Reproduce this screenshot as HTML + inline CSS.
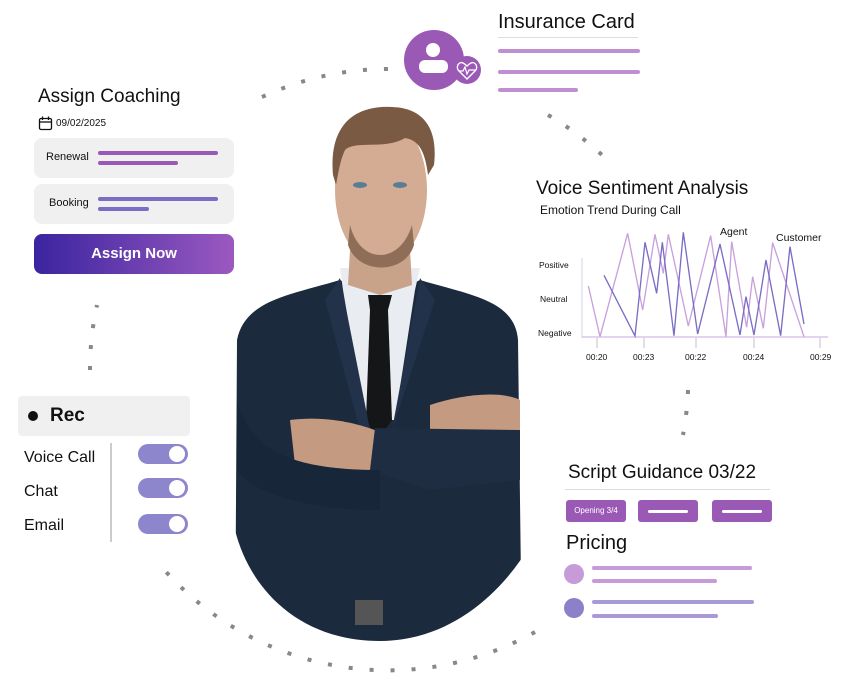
<!DOCTYPE html>
<html><head><meta charset="utf-8"><style>
*{margin:0;padding:0;box-sizing:border-box}
body{width:852px;height:673px;background:#fff;position:relative;overflow:hidden;font-family:"Liberation Sans",sans-serif;color:#111}
.a{position:absolute}
.bar{position:absolute;height:4px;border-radius:2px}
.tog{position:absolute;left:138px;width:50px;height:20px;border-radius:10px;background:#8e86cc}
.tog::after{content:"";position:absolute;right:3px;top:2px;width:16px;height:16px;border-radius:50%;background:#fff}
</style></head><body>
<svg class="a" style="left:0;top:0" width="852" height="673">
<g fill="none" stroke="#888" stroke-width="4" stroke-dasharray="4 17">
<path d="M262 97 A300 300 0 0 1 392 69"/>
<path d="M548 115 A300 300 0 0 1 602 155"/>
<path d="M688 390 A300 300 0 0 1 683 435"/>
<path d="M535 632 A300 300 0 0 1 160 565"/>
<path d="M90 370 A300 300 0 0 1 97 305"/>
</g>
<!-- man -->
<defs><clipPath id="c"><path d="M200 100 H560 V470 C540 560 470 641 380 641 C300 641 250 590 235 530 Z"/></clipPath></defs>
<g clip-path="url(#c)">
<path d="M237 340 C245 300 290 295 340 280 L380 300 L420 280 C470 295 515 300 518 340 L522 660 L235 660 Z" fill="#1b2a3c"/>
<path d="M340 268 L420 268 L415 290 L395 420 L365 420 L343 290 Z" fill="#e9ecf1"/>
<path d="M368 295 L392 295 L388 310 L392 420 L378 440 L366 420 L370 310 Z" fill="#151618"/>
<path d="M340 278 L325 300 L360 430 L372 440 Z" fill="#22324a"/>
<path d="M420 278 L435 300 L392 430 Z" fill="#22324a"/>
<rect x="355" y="600" width="28" height="25" fill="#555"/>
<path d="M290 420 C330 415 360 425 375 430 L380 470 C350 470 310 470 295 465 Z" fill="#c49a80"/>
<path d="M430 405 C460 395 500 390 520 400 L520 440 C490 445 450 445 430 440 Z" fill="#c49a80"/>
<path d="M375 428 L520 430 L520 480 L430 490 L370 470 Z" fill="#1e2d42"/>
<path d="M237 400 C250 450 290 470 380 470 L380 510 C300 510 250 490 237 470 Z" fill="#18263a"/>
<path d="M350 250 L410 250 L412 285 L380 295 L348 285 Z" fill="#c9a28a"/>
<ellipse cx="381" cy="190" rx="46" ry="75" fill="#d4ab93"/>
<path d="M350 225 C360 265 400 265 412 225 L414 245 C405 275 358 275 348 245 Z" fill="#8f6e58"/>
<path d="M333 175 C328 120 360 105 392 107 C425 108 438 130 434 165 L428 175 C425 150 418 140 405 138 C385 150 355 140 345 150 C340 160 338 175 336 185 Z" fill="#7a5a42"/>
<ellipse cx="360" cy="185" rx="7" ry="3" fill="#5b7d96"/>
<ellipse cx="400" cy="185" rx="7" ry="3" fill="#5b7d96"/>
</g>
<!-- chart -->
<line x1="582" y1="258" x2="582" y2="338" stroke="#e6e0ee" stroke-width="1.5"/>
<line x1="582" y1="337" x2="828" y2="337" stroke="#d9c6ea" stroke-width="1.5"/>
<g stroke="#ccc" stroke-width="1.2"><line x1="597" y1="338" x2="597" y2="348"/><line x1="644" y1="338" x2="644" y2="348"/><line x1="696" y1="338" x2="696" y2="348"/><line x1="754" y1="338" x2="754" y2="348"/><line x1="820" y1="338" x2="820" y2="348"/></g>
<g transform="translate(530,170) scale(0.3333)" fill="none" stroke-width="4">
<polyline stroke="#c9a0dc" points="175,348 210,500 293,190 338,420 375,193 400,310 415,193 475,468 542,197 588,500 605,215 650,472 668,320 700,475 728,218 822,500"/>
<polyline stroke="#7b6cc4" points="222,316 315,498 345,217 380,370 397,217 432,497 460,187 503,492 570,222 630,495 648,380 672,495 708,270 752,497 780,230 822,462"/>
</g>
<g font-size="8.5" fill="#111" font-family="Liberation Sans"><text x="539" y="268">Positive</text><text x="540" y="302">Neutral</text><text x="538" y="336">Negative</text>
<text x="586" y="360">00:20</text><text x="633" y="360">00:23</text><text x="685" y="360">00:22</text><text x="743" y="360">00:24</text><text x="810" y="360">00:29</text></g>
<g font-size="10.5" fill="#111"><text x="720" y="235">Agent</text><text x="776" y="241">Customer</text></g>
<!-- insurance icon -->
<circle cx="434" cy="60" r="30" fill="#9b59b6"/>
<circle cx="433" cy="50" r="7" fill="#fff"/>
<rect x="419" y="60" width="29" height="13" rx="6" fill="#fff"/>
<circle cx="467" cy="70" r="14" fill="#9b59b6"/>
<path d="M467 79 L459 71 C455 67 459 61 463 63 C465 64 466 65 467 66 C468 65 469 64 471 63 C475 61 479 67 475 71 Z" fill="none" stroke="#fff" stroke-width="1.4"/>
<path d="M459 71 H463 L465 67 L467 74 L469 70 H475" fill="none" stroke="#fff" stroke-width="1.2"/>
<!-- calendar -->
<rect x="39.5" y="118.5" width="12" height="11" rx="1.5" fill="none" stroke="#111" stroke-width="1.3"/>
<line x1="39.5" y1="122" x2="51.5" y2="122" stroke="#111" stroke-width="1.3"/>
<line x1="42.5" y1="116.5" x2="42.5" y2="120" stroke="#111" stroke-width="1.3"/><line x1="48.5" y1="116.5" x2="48.5" y2="120" stroke="#111" stroke-width="1.3"/>
<!-- waveform -->
<g stroke="#7b6cc4" stroke-width="1.6">
<line x1="98" y1="413" x2="98" y2="421"/><line x1="102" y1="409" x2="102" y2="425"/><line x1="106" y1="411" x2="106" y2="423"/><line x1="110" y1="406" x2="110" y2="428"/><line x1="114" y1="408" x2="114" y2="426"/><line x1="118" y1="403" x2="118" y2="431"/><line x1="122" y1="407" x2="122" y2="427"/><line x1="126" y1="410" x2="126" y2="424"/><line x1="130" y1="408" x2="130" y2="426"/><line x1="134" y1="413" x2="134" y2="421"/>
</g>
</svg>

<div class="a" style="left:498px;top:11px;font-size:20px">Insurance Card</div>
<div class="a" style="left:498px;top:37px;width:140px;height:1px;background:#ddd"></div>
<div class="bar" style="left:498px;top:49px;width:142px;background:#c08fd3"></div>
<div class="bar" style="left:498px;top:70px;width:142px;background:#c08fd3"></div>
<div class="bar" style="left:498px;top:88px;width:80px;background:#c08fd3"></div>

<div class="a" style="left:38px;top:86px;font-size:19px">Assign Coaching</div>
<div class="a" style="left:56px;top:118px;font-size:10px">09/02/2025</div>
<div class="a" style="left:34px;top:138px;width:200px;height:40px;border-radius:8px;background:#f0f0f0"></div>
<div class="a" style="left:46px;top:151px;font-size:11px">Renewal</div>
<div class="bar" style="left:98px;top:151px;width:120px;height:3.5px;background:#9b59b6"></div>
<div class="bar" style="left:98px;top:161px;width:80px;height:3.5px;background:#9b59b6"></div>
<div class="a" style="left:34px;top:184px;width:200px;height:40px;border-radius:8px;background:#f0f0f0"></div>
<div class="a" style="left:49px;top:197px;font-size:11px">Booking</div>
<div class="bar" style="left:98px;top:197px;width:120px;height:3.5px;background:#7b6cc4"></div>
<div class="bar" style="left:98px;top:207px;width:51px;height:3.5px;background:#7b6cc4"></div>
<div class="a" style="left:34px;top:234px;width:200px;height:40px;border-radius:8px;background:linear-gradient(90deg,#3a24a0,#9b59c0);color:#fff;font-weight:bold;font-size:15px;text-align:center;line-height:40px">Assign Now</div>

<div class="a" style="left:536px;top:178px;font-size:19px">Voice Sentiment Analysis</div>
<div class="a" style="left:540px;top:203px;font-size:12px">Emotion Trend During Call</div>

<div class="a" style="left:18px;top:396px;width:172px;height:40px;border-radius:4px;background:#f0f0f0"></div>
<div class="a" style="left:28px;top:411px;width:10px;height:10px;border-radius:50%;background:#111"></div>
<div class="a" style="left:50px;top:405px;font-size:19px;font-weight:bold">Rec</div>
<div class="a" style="left:110px;top:443px;width:1.5px;height:99px;background:#ccc"></div>
<div class="a" style="left:24px;top:449px;font-size:16px">Voice Call</div>
<div class="a" style="left:24px;top:483px;font-size:16px">Chat</div>
<div class="a" style="left:24px;top:517px;font-size:16px">Email</div>
<div class="tog" style="top:444px"></div>
<div class="tog" style="top:478px"></div>
<div class="tog" style="top:514px"></div>

<div class="a" style="left:568px;top:462px;font-size:19px">Script Guidance 03/22</div>
<div class="a" style="left:565px;top:489px;width:205px;height:1px;background:#ddd"></div>
<div class="a" style="left:566px;top:500px;width:60px;height:22px;border-radius:3px;background:#9b59b6;color:#fff;font-size:8px;text-align:center;line-height:22px">Opening 3/4</div>
<div class="a" style="left:638px;top:500px;width:60px;height:22px;border-radius:3px;background:#9b59b6"></div>
<div class="bar" style="left:648px;top:510px;width:40px;height:3px;background:#fff"></div>
<div class="a" style="left:712px;top:500px;width:60px;height:22px;border-radius:3px;background:#9b59b6"></div>
<div class="bar" style="left:722px;top:510px;width:40px;height:3px;background:#fff"></div>
<div class="a" style="left:566px;top:532px;font-size:20px">Pricing</div>
<div class="a" style="left:564px;top:564px;width:20px;height:20px;border-radius:50%;background:#c79ad8"></div>
<div class="bar" style="left:592px;top:566px;width:160px;height:3.5px;background:#c79ad8"></div>
<div class="bar" style="left:592px;top:579px;width:125px;height:3.5px;background:#c79ad8"></div>
<div class="a" style="left:564px;top:598px;width:20px;height:20px;border-radius:50%;background:#8e80c8"></div>
<div class="bar" style="left:592px;top:600px;width:162px;height:3.5px;background:#a89ad6"></div>
<div class="bar" style="left:592px;top:614px;width:126px;height:3.5px;background:#a89ad6"></div>
</body></html>
